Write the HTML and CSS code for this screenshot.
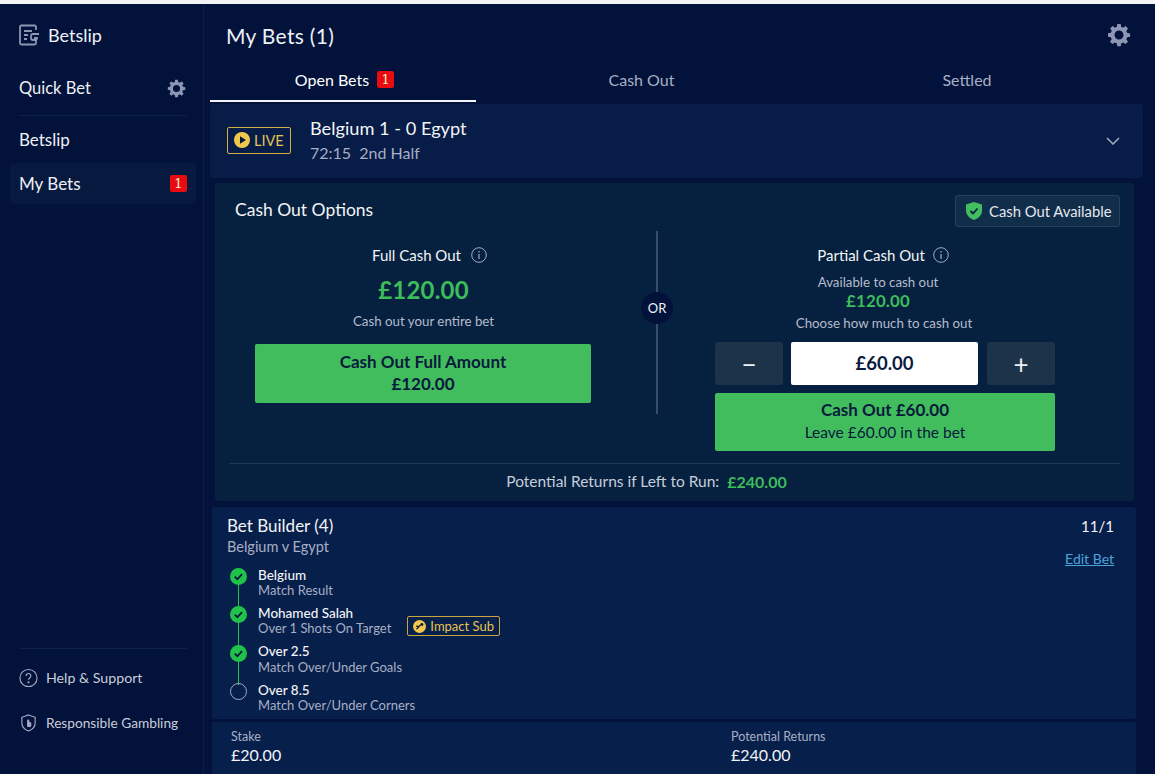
FILE: index.html
```html
<!DOCTYPE html>
<html lang="en">
<head>
<meta charset="utf-8">
<title>My Bets</title>
<link rel="stylesheet" href="styles.css">
</head>
<body>
<div class="topline"></div>
<div class="app">
  <aside class="sidebar">
    <div class="brand">
      <svg class="brand-icon" viewBox="0 0 20 22" fill="none" stroke="#8d97b3" stroke-width="1.8"><path d="M17 6V3a1.500 1.500 0 0 0-1.500-1.500h-13A1.500 1.500 0 0 0 1 3v16a1.500 1.500 0 0 0 1.500 1.500h13A1.500 1.500 0 0 0 17 19v-3"/><path d="M5 7h8M5 11h4M5 15h3M20 10h-6a2 2 0 0 0-2 2v2a2 2 0 0 0 2 2h2a2 2 0 0 0 2-2h-3"/></svg>
      <span>Betslip</span>
    </div>
    <div class="quick">
      <span>Quick Bet</span>
      <svg class="gear gear-s" viewBox="0 0 24 24"><use href="#gear"/></svg>
    </div>
    <nav class="nav">
      <div class="nav-item">Betslip</div>
      <div class="nav-item active"><span>My Bets</span><span class="badge">1</span></div>
    </nav>
    <div class="side-foot">
      <div class="foot-item">
        <svg class="foot-icon" viewBox="0 0 20 20" fill="none" stroke="#a3abc2" stroke-width="1.200"><circle cx="10" cy="10" r="9"/><path d="M7.500 7.800a2.500 2.500 0 1 1 3.800 2.100c-.9.600-1.300 1-1.300 2"/><circle cx="10" cy="14.600" r=".5" fill="#a3abc2"/></svg>
        <span>Help &amp; Support</span>
      </div>
      <div class="foot-item">
        <svg class="foot-icon" viewBox="0 0 20 20" fill="none" stroke="#a3abc2" stroke-width="1.200"><path d="M10 1.500l7 2.500v6c0 4-3 7-7 8.500-4-1.500-7-4.500-7-8.500V4z"/><path d="M8.500 14V7.500a1.200 1.200 0 0 1 2.400 0V9l2 .6V13l-1 1.500z" fill="#a3abc2" stroke="none"/></svg>
        <span>Responsible Gambling</span>
      </div>
    </div>
  </aside>
  <main class="main">
    <header class="head">
      <h1>My Bets (1)</h1>
      <svg class="gear gear-l" viewBox="0 0 24 24"><use href="#gear"/></svg>
    </header>
    <div class="tabs">
      <div class="tab on">Open Bets <span class="badge">1</span></div>
      <div class="tab">Cash Out</div>
      <div class="tab">Settled</div>
    </div>
    <section class="event">
      <div class="live">
        <svg class="live-icon" viewBox="0 0 16 16"><circle cx="8" cy="8" r="8" fill="#f1c84c"/><path d="M6 4.200l6 3.800-6 3.800z" fill="#06173d"/></svg>
        <span>LIVE</span>
      </div>
      <div class="event-text">
        <div class="score">Belgium 1 - 0 Egypt</div>
        <div class="clock">72:15&nbsp; 2nd Half</div>
      </div>
      <svg class="chev" viewBox="0 0 14 8" fill="none" stroke="#a3abc2" stroke-width="1.500"><path d="M1 1l6 6 6-6"/></svg>
    </section>
    <section class="cash">
      <div class="cash-top">
        <h2>Cash Out Options</h2>
        <div class="avail">
          <svg class="shield" viewBox="0 0 16 18"><path d="M8 0l8 2.500v6c0 4.500-3.500 7.800-8 9.500-4.500-1.700-8-5-8-9.500v-6z" fill="#43bd5f"/><path d="M4.500 9l2.500 2.500 4.500-5" fill="none" stroke="#06213f" stroke-width="1.800"/></svg>
          <span>Cash Out Available</span>
        </div>
      </div>
      <div class="cash-cols">
        <div class="col-full">
          <div class="col-title">Full Cash Out <svg class="info" viewBox="0 0 16 16"><use href="#info"/></svg></div>
          <div class="big-amt">£120.00</div>
          <div class="col-note">Cash out your entire bet</div>
          <button class="btn btn-full"><b>Cash Out Full Amount</b><b>£120.00</b></button>
        </div>
        <div class="divider"><span class="or">OR</span></div>
        <div class="col-part">
          <div class="col-title">Partial Cash Out <svg class="info" viewBox="0 0 16 16"><use href="#info"/></svg></div>
          <div class="col-note avail-note">Available to cash out</div>
          <div class="mid-amt">£120.00</div>
          <div class="col-note choose-note">Choose how much to cash out</div>
          <div class="stepper">
            <button class="step">&#8722;</button>
            <div class="amount">£60.00</div>
            <button class="step">+</button>
          </div>
          <button class="btn btn-part"><b>Cash Out £60.00</b><span>Leave £60.00 in the bet</span></button>
        </div>
      </div>
      <div class="potential">Potential Returns if Left to Run: <b>£240.00</b></div>
    </section>
    <section class="builder">
      <div class="b-head">
        <div>
          <div class="b-title">Bet Builder (4)</div>
          <div class="b-sub">Belgium v Egypt</div>
        </div>
        <div class="b-right">
          <div class="odds">11/1</div>
          <a class="edit">Edit Bet</a>
        </div>
      </div>
      <ul class="legs">
        <li class="leg done">
          <svg class="tick" viewBox="0 0 16 16"><use href="#tick"/></svg>
          <div><div class="leg-name">Belgium</div><div class="leg-sub">Match Result</div></div>
        </li>
        <li class="leg done">
          <svg class="tick" viewBox="0 0 16 16"><use href="#tick"/></svg>
          <div><div class="leg-name">Mohamed Salah</div><div class="leg-sub">Over 1 Shots On Target</div></div>
          <div class="impact">
            <svg class="impact-icon" viewBox="0 0 14 14"><circle cx="7" cy="7" r="7" fill="#f1c84c"/><path d="M3.500 9.500C5 9.500 5.500 8 6.500 7S8 4.500 10.500 4.500M8.500 3.500l2 1-1 2M3.500 6.500l2 .5" fill="none" stroke="#06173d" stroke-width="1.400"/></svg>
            <span>Impact Sub</span>
          </div>
        </li>
        <li class="leg done">
          <svg class="tick" viewBox="0 0 16 16"><use href="#tick"/></svg>
          <div><div class="leg-name">Over 2.5</div><div class="leg-sub">Match Over/Under Goals</div></div>
        </li>
        <li class="leg">
          <span class="ring"></span>
          <div><div class="leg-name">Over 8.5</div><div class="leg-sub">Match Over/Under Corners</div></div>
        </li>
      </ul>
    </section>
    <section class="stake">
      <div class="stake-col"><div class="s-label">Stake</div><div class="s-val">£20.00</div></div>
      <div class="stake-col"><div class="s-label">Potential Returns</div><div class="s-val">£240.00</div></div>
    </section>
  </main>
</div>
<svg class="defs" width="0" height="0" aria-hidden="true">
  <defs>
    <symbol id="gear" viewBox="0 0 24 24"><path fill-rule="evenodd" fill="#8d97b3" d="M10.300 1h3.400l.5 2.900c.7.200 1.400.5 2 .9l2.400-1.700 2.400 2.400-1.700 2.400c.4.600.7 1.300.9 2l2.900.5v3.400l-2.900.5c-.2.700-.5 1.400-.9 2l1.700 2.400-2.400 2.400-2.400-1.700c-.6.400-1.300.7-2 .9l-.5 2.900h-3.400l-.5-2.900c-.7-.2-1.400-.5-2-.9l-2.400 1.700-2.400-2.400 1.700-2.400c-.4-.6-.7-1.300-.9-2L1 13.700v-3.400l2.900-.5c.2-.7.500-1.400.9-2L3.100 5.400l2.400-2.400 2.400 1.700c.6-.4 1.300-.7 2-.9zM12 7.500a4.500 4.500 0 1 0 0 9 4.500 4.500 0 0 0 0-9z"/></symbol>
    <symbol id="info" viewBox="0 0 16 16"><circle cx="8" cy="8" r="7.300" fill="none" stroke="#a3abc2"/><path d="M8 7v5M8 4v1.400" stroke="#a3abc2" stroke-width="1.200" fill="none"/></symbol>
    <symbol id="tick" viewBox="0 0 16 16"><circle cx="8" cy="8" r="8" fill="#21c24a"/><path d="M4.500 8.200l2.400 2.400 4.400-4.800" fill="none" stroke="#06173d" stroke-width="1.700"/></symbol>
  </defs>
</svg>
</body>
</html>
```
FILE: styles.css
```css
* { box-sizing: border-box; }
html, body { margin: 0; height: 100%; }
body {
  background: #02123a;
  color: #fff;
  font-family: Lato, "Liberation Sans", sans-serif;
  overflow: hidden;
}
.topline { height: 4px; background: #f3f4f7; }
.defs { position: absolute; }
.app { display: flex; height: 770px; }

.sidebar {
  width: 204px;
  flex: none;
  border-right: 1px solid #0b1e47;
  display: flex;
  flex-direction: column;
  background: #02123a;
}
.brand {
  display: flex;
  align-items: center;
  gap: 9px;
  padding: 0 0 0 19px;
  height: 63px;
  padding-bottom: 2px;
  font-size: 18px;
  color: #eef0f5;
  flex: none;
}
.brand-icon { width: 20px; height: 22px; }
.quick {
  display: flex;
  justify-content: space-between;
  align-items: center;
  margin: 0 16px 0 19px;
  height: 49px;
  padding: 0 1px 6px 0;
  font-size: 16.500px;
  color: #eef0f5;
  border-bottom: 1px solid #0d2049;
  flex: none;
}
.gear { display: block; }
.gear-s { width: 19px; height: 19px; }
.gear-l { width: 24px; height: 24px; }
.nav { padding: 0 7px 0 10px; }
.nav-item {
  height: 47px;
  display: flex;
  align-items: center;
  justify-content: space-between;
  padding: 0 9px;
  font-size: 17px;
  color: #eef0f5;
}
.nav-item.active { background: #07193f; border-radius: 4px; height: 41px; }
.badge {
  display: inline-block;
  width: 17px;
  height: 17px;
  line-height: 17px;
  border-radius: 2px;
  background: #e90b12;
  color: #f7efc0;
  font-size: 13px;
  text-align: center;
  font-family: "DejaVu Serif", serif;
}
.side-foot { margin: auto 16px 0 19px; padding-bottom: 29px; }
.foot-item {
  display: flex;
  align-items: center;
  gap: 8px;
  color: #c8cdda;
  height: 45px;
  font-size: 14.200px;
}
.foot-item + .foot-item { font-size: 13.700px; }
.side-foot::before { content: ""; display: block; height: 1px; background: #0d2049; margin-bottom: 6px; }
.foot-icon { width: 19px; height: 20px; }

.main { flex: 1; min-width: 0; padding: 0 12px 0 6px; display: flex; flex-direction: column; }
.head {
  height: 56px;
  flex: none;
  display: flex;
  align-items: center;
  justify-content: space-between;
  padding: 6px 12px 0 16px;
}
h1 { margin: 0; font-size: 21px; font-weight: 400; color: #eef0f5; letter-spacing: .3px; }
.tabs { display: grid; grid-template-columns: 266px 331px 320px; height: 42px; flex: none; }
.tab {
  display: flex;
  align-items: center;
  justify-content: center;
  gap: 8px;
  font-size: 16px;
  color: #a8afc4;
  padding-bottom: 4px;
}
.tab.on { color: #fff; border-bottom: 2px solid #f3f4f7; padding: 0 0 2px 3px; }
.event {
  flex: none;
  height: 74px;
  margin: 2px 0 5px 0;
  background: #071c47;
  border-radius: 3px;
  display: flex;
  align-items: center;
  padding: 0 23px 0 17px;
}
.live {
  display: flex;
  align-items: center;
  gap: 4px;
  width: 64px;
  height: 27px;
  margin-top: -2px;
  padding-left: 6px;
  border: 1px solid #d3ad45;
  border-radius: 2px;
  color: #e4c254;
  font-size: 14.500px;
}
.live-icon { width: 16px; height: 16px; flex: none; }
.event-text { margin: -1px 0 0 19px; flex: 1; }
.score { font-size: 18.200px; color: #f3f4f7; line-height: 24px; }
.clock { font-size: 16px; color: #a8afc4; line-height: 24px; margin-top: 1px; }
.chev { width: 14px; height: 8px; }

.cash {
  flex: none;
  height: 318px;
  margin: 0 9px 6px 5px;
  background: #05213f;
  border-radius: 3px;
  display: flex;
  flex-direction: column;
  padding: 0 14px;
}
.cash-top { height: 48px; display: flex; align-items: center; justify-content: space-between; padding: 8px 0 0 6px; flex: none; }
h2 { margin: -4px 0 0; font-size: 17.500px; font-weight: 400; color: #f3f4f7; }
.avail {
  display: flex;
  align-items: center;
  gap: 7px;
  height: 32px;
  width: 165px;
  padding-left: 10px;
  border: 1px solid #28405c;
  border-radius: 3px;
  background: #102d4a;
  font-size: 14.800px;
  color: #e5e8ee;
}
.shield { width: 16px; height: 18px; flex: none; }
.cash-cols { display: flex; flex: 1; min-height: 0; }
.col-full { width: 389px; display: flex; flex-direction: column; align-items: center; padding: 14px 0 0 0; }
.col-title { display: flex; align-items: center; gap: 8px; font-size: 15px; color: #f3f4f7; height: 20px; }
.col-full .col-title { margin-left: 12px; gap: 10px; }
.info { width: 16px; height: 16px; }
.big-amt { font-size: 24px; font-weight: 700; color: #3ebc5c; margin-top: 10px; line-height: 30px; letter-spacing: .2px; }
.col-note { font-size: 13.300px; color: #b6bccd; line-height: 18px; }
.col-full .col-note { margin-top: 7px; }
.btn {
  border: 0;
  border-radius: 2px;
  background: #42bd5e;
  color: #061a3c;
  font-family: inherit;
  display: flex;
  flex-direction: column;
  align-items: center;
  justify-content: center;
  font-size: 17px;
  line-height: 22px;
  padding: 0 0 2px;
}
.btn b { font-weight: 700; }
.btn-full { width: 336px; height: 59px; margin-top: 14px; margin-left: -1px; }
.divider {
  width: 2px;
  margin: 0 0 0 38px;
  position: relative;
  height: 183px;
  background: #3a4e68;
  flex: none;
}
.or {
  position: absolute;
  top: 61px;
  left: -15px;
  width: 32px;
  height: 32px;
  border-radius: 50%;
  background: #02123a;
  color: #eef0f5;
  font-size: 13px;
  display: flex;
  align-items: center;
  justify-content: center;
}
.col-part { width: 340px; margin-left: 57px; display: flex; flex-direction: column; align-items: center; padding-top: 14px; }
.col-part .col-title { margin-left: -4px; }
.avail-note { margin: 8px 14px 0 0; }
.mid-amt { font-size: 16.800px; font-weight: 700; color: #3ebc5c; line-height: 20px; margin-right: 14px; letter-spacing: .2px; }
.choose-note { margin: 3px 2px 0 0; }
.stepper { display: flex; justify-content: space-between; width: 340px; margin-top: 10px; height: 43px; }
.step {
  width: 68px;
  border: 0;
  border-radius: 3px;
  background: #1c3349;
  color: #eef0f5;
  font-size: 26px;
  font-family: inherit;
  padding: 0;
}
.amount {
  width: 187px;
  margin-left: -1px;
  background: #fff;
  border-radius: 2px;
  color: #0b1a3f;
  font-weight: 700;
  font-size: 18.500px;
  display: flex;
  align-items: center;
  justify-content: center;
  padding-bottom: 2px;
}
.btn-part { width: 340px; height: 58px; margin-top: 8px; }
.btn-part span { font-size: 15.500px; }
.potential {
  flex: none;
  height: 38px;
  margin-top: 12px;
  border-top: 1px solid #1c3a55;
  display: flex;
  align-items: center;
  justify-content: center;
  gap: 4px;
  padding: 0 56px 3px 0;
  font-size: 15.500px;
  color: #c8cdda;
}
.potential b { color: #3ebc5c; font-weight: 700; margin-left: 4px; font-size: 16px; }

.builder {
  flex: none;
  height: 212px;
  margin: 0 7px 3px 2px;
  background: #071f4b;
  border-radius: 3px;
  padding: 7px 22px 0 15px;
}
.b-head { display: flex; justify-content: space-between; height: 50px; }
.b-title { font-size: 17px; color: #f3f4f7; line-height: 24px; }
.b-sub { font-size: 14.500px; color: #a8afc4; line-height: 20px; margin-top: -1px; }
.b-right { display: flex; flex-direction: column; align-items: flex-end; }
.odds { font-size: 15px; color: #f3f4f7; line-height: 24px; }
.edit { font-size: 14px; color: #4da4db; text-decoration: underline; margin-top: 12px; }
.legs { list-style: none; margin: 0; padding: 0; }
.leg { display: flex; align-items: center; gap: 11px; height: 38.300px; position: relative; padding-left: 3px; }
.leg.done::after { content: ""; position: absolute; left: 11px; top: 20px; width: 1px; height: 24px; background: #21c24a; }
.tick { width: 17px; height: 17px; flex: none; position: relative; z-index: 1; align-self: flex-start; margin-top: 4px; }
.ring { width: 17px; height: 17px; flex: none; border: 1px solid #a3abc2; border-radius: 50%; align-self: flex-start; margin-top: 4px; }
.leg-name { font-size: 13.500px; line-height: 15.500px; color: #f3f4f7; font-weight: 500; }
.leg-sub { font-size: 13px; line-height: 15.500px; color: #a8afc4; }
.impact {
  display: flex;
  align-items: center;
  gap: 4px;
  height: 20px;
  padding: 0 5px;
  margin: 10px 0 0 5px;
  border: 1px solid #c9a63f;
  border-radius: 2px;
  font-size: 13px;
  color: #e4c254;
}
.impact-icon { width: 13px; height: 13px; }

.stake {
  flex: none;
  margin: 0 7px 0 2px;
  height: 52px;
  background: #071f4b;
  display: flex;
  padding: 7px 0 0 19px;
}
.stake-col { flex: 1; min-width: 0; }
.stake-col:first-child { flex: 0 0 500px; }
.s-label { font-size: 12.500px; color: #a8afc4; line-height: 15px; }
.s-val { font-size: 16px; color: #f3f4f7; line-height: 22px; }
```
